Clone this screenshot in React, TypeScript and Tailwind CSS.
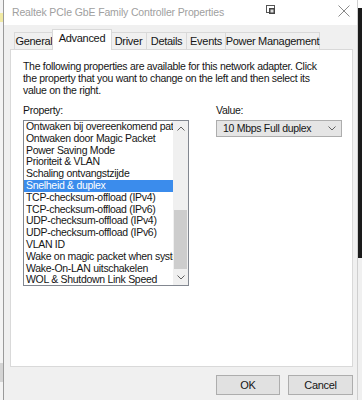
const PROPS = [
  'Ontwaken bij overeenkomend patroon',
  'Ontwaken door Magic Packet',
  'Power Saving Mode',
  'Prioriteit & VLAN',
  'Schaling ontvangstzijde',
  'Snelheid & duplex',
  'TCP-checksum-offload (IPv4)',
  'TCP-checksum-offload (IPv6)',
  'UDP-checksum-offload (IPv4)',
  'UDP-checksum-offload (IPv6)',
  'VLAN ID',
  'Wake on magic packet when system is in S0ix',
  'Wake-On-LAN uitschakelen',
  'WOL & Shutdown Link Speed',
]

const TABS: { label: string; w: string }[] = [
  { label: 'General', w: 'w-[40px]' },
  { label: 'Advanced', w: 'w-[60px]' },
  { label: 'Driver', w: 'w-[37px]' },
  { label: 'Details', w: 'w-[41px]' },
  { label: 'Events', w: 'w-[40px]' },
  { label: 'Power Management', w: 'w-[95px]' },
]

function Chevron({ up = false }: { up?: boolean }) {
  return (
    <svg width="8" height="5" viewBox="0 0 8 5" className="block">
      <path
        d={up ? 'M0.5 4.5 L4 1 L7.5 4.5' : 'M0.5 0.5 L4 4 L7.5 0.5'}
        fill="none"
        stroke="#606060"
        strokeWidth="1"
      />
    </svg>
  )
}

export default function App() {
  const selected = 5
  return (
    <div
      className="w-[362px] h-[400px] overflow-hidden flex bg-[#f0f0f0] text-[10.5px] tracking-[-0.3px] text-[#151515]"
      style={{ fontFamily: '"Liberation Sans", Arial, sans-serif' }}
    >
      {/* achtergrondvenster links */}
      <div className="w-[4px] h-full flex flex-col bg-[#f4f4f4] border-r border-[#9a9a9a]">
        <div className="h-[13px]" />
        <div className="h-[9px] bg-[#f1eaa4]" />
        <div className="flex-1" />
        <div className="h-[19px] bg-[#d4d4d4]" />
        <div className="h-[18px]" />
      </div>

      {/* dialoog */}
      <div className="flex-1 flex flex-col min-w-0">
        {/* titelbalk */}
        <div className="h-[25px] bg-white flex items-center pl-[8px] pr-[7px]">
          <span className="flex-1 whitespace-nowrap text-[10.5px] tracking-[-0.15px] text-[#a0a0a0]">
            Realtek PCIe GbE Family Controller Properties
          </span>
          <svg width="10" height="10" viewBox="0 0 10 10" className="mr-[62px] -mt-[5px]">
            <rect x="0.5" y="0.5" width="8" height="7" fill="#fff" stroke="#555" />
            <rect x="3" y="3" width="6" height="6" fill="#444" />
            <rect x="4.5" y="4.5" width="3" height="3" fill="#ddd" />
          </svg>
          <svg width="12" height="12" viewBox="0 0 12 12" className="-mt-[3px]">
            <path d="M0.5 0.5 L11.5 11.5 M11.5 0.5 L0.5 11.5" stroke="#8a8a8a" strokeWidth="1" />
          </svg>
        </div>

        {/* tabbladen */}
        <div className="flex items-end h-[25px] pl-[10px]">
          {TABS.map((t, i) =>
            i === 1 ? (
              <div
                key={t.label}
                className={`${t.w} relative z-10 -ml-[2px] -mr-[1px] h-[21px] bg-white border border-b-0 border-[#d9d9d9] flex justify-center pt-[3px] text-[11px] leading-none whitespace-nowrap`}
              >
                {t.label}
              </div>
            ) : (
              <div
                key={t.label}
                className={`${t.w} h-[18px] bg-[#f0f0f0] border border-b-0 border-[#d9d9d9] -ml-px first:ml-0 flex items-center justify-center text-[11px] leading-none whitespace-nowrap`}
              >
                {t.label}
              </div>
            )
          )}
        </div>

        {/* paneel */}
        <div className="ml-[6px] mr-[4px] h-[318px] -mt-px bg-white border border-[#d9d9d9] pl-[12px] pr-[6px] pt-[10px]">
          <p className="leading-[12px] whitespace-nowrap">
            The following properties are available for this network adapter. Click
            <br />
            the property that you want to change on the left and then select its
            <br />
            value on the right.
          </p>

          <div className="flex mt-[8px]">
            <div className="w-[166px]">
              <div className="leading-[12px]">Property:</div>
              <div className="mt-[4px] h-[166px] border border-[#828790] flex bg-white">
                <ul className="flex-1 min-w-0 overflow-hidden">
                  {PROPS.map((p, i) => (
                    <li
                      key={p}
                      className={`h-[11.8px] leading-[11.8px] pl-[2px] whitespace-nowrap overflow-hidden ${
                        i === selected ? 'bg-[#3b8cec] text-white' : ''
                      }`}
                    >
                      {p}
                    </li>
                  ))}
                </ul>
                <div className="w-[15px] flex flex-col bg-[#f0f0f0]">
                  <div className="h-[15px] flex items-center justify-center">
                    <Chevron up />
                  </div>
                  <div className="flex-1 flex flex-col">
                    <div className="h-[74px]" />
                    <div className="h-[59px] mx-px bg-[#cdcdcd]" />
                  </div>
                  <div className="h-[15px] flex items-center justify-center">
                    <Chevron />
                  </div>
                </div>
              </div>
            </div>

            <div className="ml-[27px] w-[126px]">
              <div className="leading-[12px]">Value:</div>
              <div className="mt-[4px] h-[17px] border border-[#adadad] bg-[#e5e5e5] flex items-center pl-[6px] pr-[5px]">
                <span className="flex-1 whitespace-nowrap">10 Mbps Full duplex</span>
                <Chevron />
              </div>
            </div>
          </div>
        </div>

        {/* knoppen */}
        <div className="flex justify-end gap-[8px] mt-[8px] mr-[4px]">
          <button className="w-[64px] h-[20px] bg-[#e1e1e1] border border-[#adadad] text-[11px]">OK</button>
          <button className="w-[65px] h-[20px] bg-[#e1e1e1] border border-[#adadad] text-[11px]">Cancel</button>
        </div>
      </div>

      {/* rand rechts */}
      <div className="w-[5px] h-full flex flex-col border-l border-[#cfcfcf]">
        <div className="h-[8px] bg-white" />
        <div className="h-[250px] bg-[#1a1a1a]" />
        <div className="flex-1 bg-[#f0f0f0]" />
      </div>
    </div>
  )
}
